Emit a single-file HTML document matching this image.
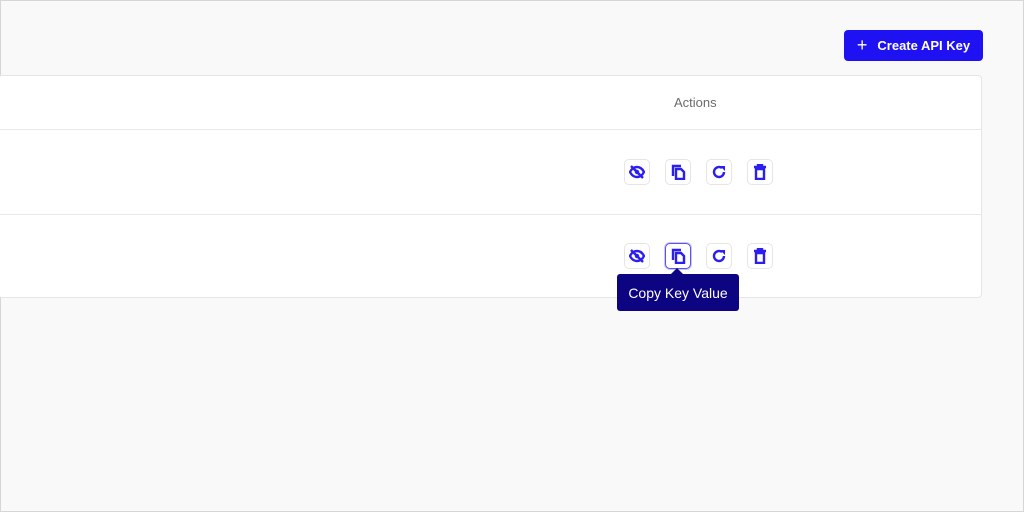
<!DOCTYPE html>
<html><head><style>
body{margin:0;width:1024px;height:512px;background:#f9f9f9;font-family:"Liberation Sans",sans-serif;position:relative;overflow:hidden}
.frame{position:absolute;left:0;top:0;width:1022px;height:510px;border:1px solid #d6d6d6}
.btn{position:absolute;left:844px;top:30px;width:139px;height:31px;background:#1f12f2;border-radius:4px;color:#fff;font-size:13px;font-weight:bold;display:flex;align-items:center;justify-content:center;gap:10px}
.card{position:absolute;left:-2px;top:75px;width:982px;height:221px;background:#fff;border:1px solid #e6e6e6;border-radius:4px}
.line{position:absolute;left:0;width:982px;height:1px;background:#e9e9e9}
.hdr{position:absolute;left:674px;top:95px;font-size:13px;color:#6b6b6b}
.ib{position:absolute;width:24px;height:24px;border:1px solid #e5e5e5;border-radius:5px;background:#fff;display:flex;align-items:center;justify-content:center}
.ib.act{border-color:#5a52f5;box-shadow:0 0 0 1px #c9c6fc}
.tip{position:absolute;left:617px;top:274px;width:122px;height:37px;background:#0c0480;border-radius:3px;color:#fff;font-size:14px;display:flex;align-items:center;justify-content:center}
.tip:before{content:"";position:absolute;left:54px;top:-6px;border:6px solid transparent;border-top:0;border-bottom-color:#0c0480}
</style></head><body>
<div class="frame"></div>
<div class="btn"><span style="font-size:18px;font-weight:normal">+</span><span>Create API Key</span></div>
<div class="card">
<div class="line" style="top:53px"></div>
<div class="line" style="top:138px"></div>
</div>
<div class="hdr">Actions</div>
<svg width="0" height="0" style="position:absolute"><defs>
<g id="eye"><path d="M1 8C3 4 6 3 8 3s5 1 7 5c-2 4-5 5-7 5S3 12 1 8z" fill="none" stroke="#2a1ff0" stroke-width="2.4"/><circle cx="8" cy="8" r="2.2" fill="#2a1ff0"/><path d="M2 2l12 12" stroke="#2a1ff0" stroke-width="2.4"/></g>
<g id="copy"><path d="M3 12V2h8" fill="none" stroke="#2a1ff0" stroke-width="2.4"/><path d="M6 5h5l3 3v7H6z" fill="none" stroke="#2a1ff0" stroke-width="2.4"/></g>
<g id="ref"><path d="M13 8a5 5 0 1 1-2-4" fill="none" stroke="#2a1ff0" stroke-width="2.4"/><path d="M9 2h5v5z" fill="#2a1ff0"/></g>
<g id="del"><path d="M2 3h12M6 3V1h4v2" stroke="#2a1ff0" stroke-width="2.4" fill="none"/><path d="M4 5h8v10H4z" fill="none" stroke="#2a1ff0" stroke-width="2.4"/></g>
</defs></svg>
<div class="ib" style="left:624px;top:159px"><svg width="16" height="16"><use href="#eye"/></svg></div>
<div class="ib" style="left:665px;top:159px"><svg width="16" height="16"><use href="#copy"/></svg></div>
<div class="ib" style="left:706px;top:159px"><svg width="16" height="16"><use href="#ref"/></svg></div>
<div class="ib" style="left:747px;top:159px"><svg width="16" height="16"><use href="#del"/></svg></div>
<div class="ib" style="left:624px;top:243px"><svg width="16" height="16"><use href="#eye"/></svg></div>
<div class="ib act" style="left:665px;top:243px"><svg width="16" height="16"><use href="#copy"/></svg></div>
<div class="ib" style="left:706px;top:243px"><svg width="16" height="16"><use href="#ref"/></svg></div>
<div class="ib" style="left:747px;top:243px"><svg width="16" height="16"><use href="#del"/></svg></div>
<div class="tip">Copy Key Value</div>
</body></html>
